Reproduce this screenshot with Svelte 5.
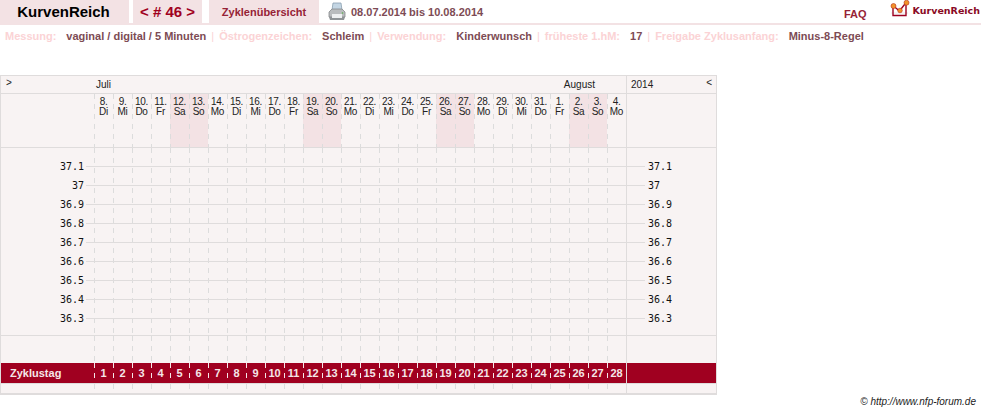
<script>
	const weekdays = ['Mo', 'Di', 'Mi', 'Do', 'Fr', 'Sa', 'So'];
	const start = new Date(2014, 6, 8);
	const days = Array.from({ length: 28 }, (_, i) => {
		const d = new Date(2014, 6, 8 + i);
		return { n: d.getDate(), wd: weekdays[(d.getDay() + 6) % 7], weekend: d.getDay() % 6 === 0, cycle: i + 1 };
	});
	const temps = ['37.1', '37', '36.9', '36.8', '36.7', '36.6', '36.5', '36.4', '36.3'];
	const info = [
		['Messung:', 'vaginal / digital / 5 Minuten'],
		['Östrogenzeichen:', 'Schleim'],
		['Verwendung:', 'Kinderwunsch'],
		['früheste 1.hM:', '17'],
		['Freigabe Zyklusanfang:', 'Minus-8-Regel']
	];
</script>

<div class="page">
	<header class="topbar">
		<div class="tab brand">KurvenReich</div>
		<div class="tab cycle">&lt; # 46 &gt;</div>
		<div class="tab overview">Zyklenübersicht</div>
		<svg class="printer" width="18" height="20" viewBox="0 0 18 20">
			<path d="M5 1h8l1 7H4z" fill="#c4d6e4" stroke="#8aa0b0" stroke-width=".8" />
			<path d="M1 10l3-3h10l3 3v5H1z" fill="#b9bcbe" stroke="#85898c" stroke-width=".8" />
			<path d="M1 15h16l-1 3H2z" fill="#8f9497" />
			<rect x="4" y="12" width="10" height="4" fill="#eef0f1" />
			<circle cx="14.5" cy="11" r=".8" fill="#58b04a" />
		</svg>
		<div class="dates">08.07.2014 bis 10.08.2014</div>
		<div class="faq">FAQ</div>
		<div class="logo">
			<svg width="20" height="19" viewBox="0 0 20 19">
				<path d="M1 13h17" stroke="#e8e4e4" stroke-width="1" fill="none" />
				<path d="M3 7v8.500h13V4" stroke="#9c0020" stroke-width="1.400" fill="none" />
				<path d="M3.500 6l6 5 7-9" stroke="#9c0020" stroke-width="1.400" fill="none" />
				<circle cx="3.500" cy="6" r="2.500" fill="#f0932b" stroke="#b8311f" stroke-width=".6" />
				<circle cx="10" cy="10.500" r="2.300" fill="#f0932b" stroke="#b8311f" stroke-width=".6" />
				<circle cx="16.500" cy="2.700" r="2.500" fill="#f0932b" stroke="#b8311f" stroke-width=".6" />
			</svg>
			<span>KurvenReich</span>
		</div>
	</header>

	<div class="info">
		{#each info as [label, value], i}
			{#if i > 0}<span class="sep">|</span>{/if}
			<span class="label">{label}</span>
			<span class="value">{value}</span>
		{/each}
	</div>

	<section class="chart">
		<div class="row months">
			<div class="lead toggle">&gt;</div>
			<div class="month-names"><span>Juli</span><span>August</span></div>
			<div class="tail year"><span>2014</span><span class="toggle">&lt;</span></div>
		</div>

		<div class="row dayrow">
			<div class="lead"></div>
			{#each days as d}
				<div class="cell day" class:weekend={d.weekend}>{d.n}.<br />{d.wd}</div>
			{/each}
			<div class="tail"></div>
		</div>

		<div class="row plot">
			<div class="lead"></div>
			{#each days as d}
				<div class="cell"></div>
			{/each}
			<div class="tail"></div>
			<div class="temps">
				{#each temps as t}
					<div class="temp">
						<span class="t-left">{t}</span>
						<span class="t-line"></span>
						<span class="t-right">{t}</span>
					</div>
				{/each}
			</div>
		</div>

		<div class="row blank">
			<div class="lead"></div>
			{#each days as d}
				<div class="cell"></div>
			{/each}
			<div class="tail"></div>
		</div>

		<div class="row cycleday">
			<div class="lead">Zyklustag</div>
			{#each days as d}
				<div class="cell">{d.cycle}</div>
			{/each}
			<div class="tail"></div>
		</div>

		<div class="row foot">
			<div class="lead"></div>
			{#each days as d}
				<div class="cell"></div>
			{/each}
			<div class="tail"></div>
		</div>
	</section>

	<div class="copyright">© http://www.nfp-forum.de</div>
</div>

<style>
	:global(body) {
		margin: 0;
		background: #fff;
	}

	.page {
		width: 981px;
		height: 412px;
		overflow: hidden;
		font-family: 'Liberation Sans', Arial, sans-serif;
	}

	.topbar {
		display: flex;
		align-items: stretch;
		height: 23px;
		border-bottom: 2px solid #f3e2e4;
	}

	.tab {
		background: #f3e2e4;
		display: flex;
		align-items: center;
		justify-content: center;
	}

	.brand {
		width: 129px;
		font-size: 15px;
		font-weight: bold;
		color: #000;
		margin-right: 4px;
		padding-right: 2px;
		box-sizing: border-box;
	}

	.cycle {
		width: 69px;
		font-size: 15px;
		font-weight: bold;
		color: #a00020;
		margin-right: 7px;
	}

	.overview {
		width: 110px;
		font-size: 11px;
		font-weight: bold;
		color: #962336;
	}

	.printer {
		margin: 2px 0 0 9px;
	}

	.dates {
		margin-left: 5px;
		font-size: 11px;
		font-weight: bold;
		color: #7d4b54;
		line-height: 25px;
	}

	.faq {
		margin-left: auto;
		font-size: 11px;
		font-weight: bold;
		color: #962336;
		line-height: 29px;
	}

	.logo {
		display: flex;
		align-items: flex-start;
		margin-left: 23px;
		margin-right: 1px;
		font-family: 'DejaVu Sans', sans-serif;
		font-size: 9.500px;
		font-weight: bold;
		color: #8a0a24;
	}

	.logo span {
		margin-left: 3px;
		line-height: 21px;
	}

	.info {
		display: flex;
		height: 22px;
		padding-left: 5px;
		align-items: center;
		font-size: 11px;
		font-weight: bold;
	}

	.label {
		color: #fbd3d5;
		margin-right: 10px;
	}

	.value {
		color: #7d4b54;
	}

	.sep {
		color: #fbd3d5;
		font-weight: normal;
		margin: 0 5px;
	}

	.chart {
		margin-top: 28px;
		width: 717px;
		box-sizing: border-box;
		border: 1px solid #dfdcdc;
		border-bottom-width: 2px;
		background: #f8f3f3;
		font-size: 10px;
		color: #222;
	}

	.row {
		display: flex;
		position: relative;
	}

	.row + .row {
		border-top: 1px solid #dfdcdc;
	}

	.lead {
		width: 93px;
		flex: none;
	}

	.cell {
		width: 19px;
		flex: none;
		box-sizing: border-box;
		background: repeating-linear-gradient(to bottom, #dcdcdc 0 5px, transparent 5px 10px) left top / 1px 100% no-repeat;
	}

	.tail {
		width: 89px;
		flex: none;
		border-left: 1px solid #dfdcdc;
	}

	.months {
		height: 17px;
		line-height: 17px;
	}

	.toggle {
		font-size: 10px;
		padding-left: 5px;
		line-height: 14px;
		box-sizing: border-box;
	}

	.month-names {
		width: 532px;
		flex: none;
		display: flex;
		justify-content: space-between;
		padding: 0 31px 0 2px;
		box-sizing: border-box;
	}

	.year {
		display: flex;
		justify-content: space-between;
		padding-left: 4px;
		box-sizing: border-box;
	}

	.year .toggle {
		padding-right: 3px;
	}

	.dayrow {
		height: 53px;
	}

	.day {
		text-align: center;
		line-height: 10px;
		padding-top: 3px;
		letter-spacing: -0.3px;
	}

	.day.weekend {
		background-color: #f3e2e4;
	}

	.plot {
		height: 187px;
	}

	.temps {
		position: absolute;
		left: 0;
		top: 9px;
		width: 100%;
		font-family: 'DejaVu Sans Mono', monospace;
		font-size: 10px;
		color: #111;
	}

	.temp {
		display: flex;
		align-items: center;
		height: 19px;
	}

	.t-left {
		width: 83px;
		flex: none;
		text-align: right;
	}

	.t-line {
		width: 559px;
		flex: none;
		height: 1px;
		margin-left: 2px;
		background: #dfdcdc;
	}

	.t-right {
		margin-left: 3px;
	}

	.blank {
		height: 27px;
	}

	.cycleday {
		height: 20px;
		background: #a00020;
		color: #f5e6e8;
		font-size: 11px;
		font-weight: bold;
		line-height: 21px;
		border-top: 0 !important;
	}

	.cycleday .lead {
		padding-left: 9px;
		box-sizing: border-box;
	}

	.cycleday .cell {
		text-align: center;
		background-image: repeating-linear-gradient(to bottom, #f5e6e8 0 5px, transparent 5px 10px);
	}

	.foot {
		height: 9px;
	}

	.copyright {
		text-align: right;
		padding-right: 5px;
		font-size: 10px;
		font-style: italic;
		color: #222;
		margin-top: 1px;
	}
</style>
